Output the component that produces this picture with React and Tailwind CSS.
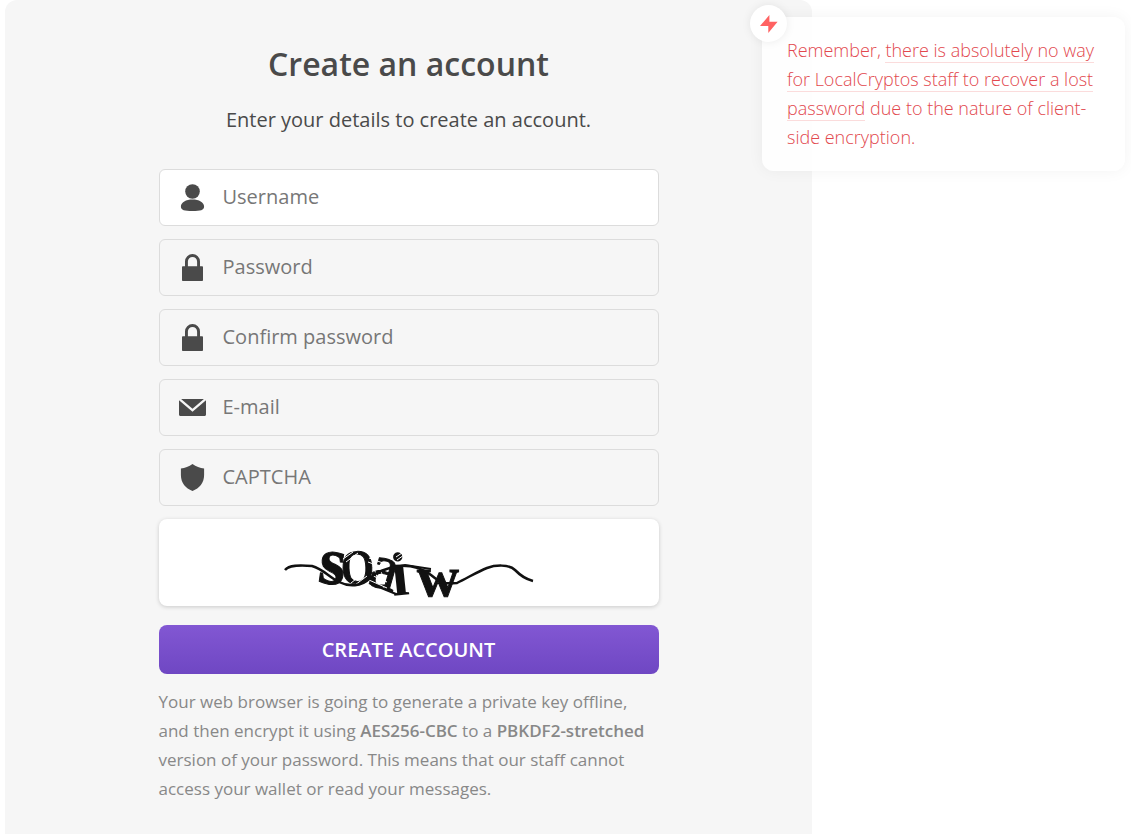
const iconClass = 'h-7 w-7 fill-[#4a4a4a]';

function UserIcon() {
	return (
		<svg viewBox="0 0 28 28" className={iconClass} aria-hidden="true">
			<circle cx="13.500" cy="7.500" r="7.300" />
			<path d="M1.900 22.500c0-4.400 5.200-7.100 11.600-7.100s11.600 2.700 11.600 7.100c0 3.700-3.600 4.500-11.600 4.500s-11.600-.800-11.600-4.500z" />
		</svg>
	);
}

function LockIcon() {
	return (
		<svg viewBox="0 0 28 28" className={iconClass} aria-hidden="true">
			<path d="M6 12.200V7.500a7.500 7.500 0 0 1 15 0v4.700h2.200c.500 0 .800.400.800.800v13.200c0 .500-.400.800-.800.800H3.800c-.500 0-.800-.400-.800-.800V13c0-.500.400-.800.800-.800zm2.900 0h9.200V7.500a4.600 4.600 0 0 0-9.200 0z" />
		</svg>
	);
}

function MailIcon() {
	return (
		<svg viewBox="0 0 28 28" className={iconClass} aria-hidden="true">
			<path d="M2.100 5h22.800L13.500 14.800zM0 6.300l13.500 11.500L27 6.300v14.200c0 .900-.600 1.500-1.500 1.500h-24C.6 22 0 21.400 0 20.500z" />
		</svg>
	);
}

function ShieldIcon() {
	return (
		<svg viewBox="0 0 28 28" className={iconClass} aria-hidden="true">
			<path d="M13.500 0c3.500 2.500 7.500 3.900 11.600 4.500V11c0 8-4.600 13.200-11.600 15.900C6.500 24.200 1.900 19 1.900 11V4.500C6 3.900 10 2.500 13.500 0z" />
		</svg>
	);
}

const fields = [
	{ id: 'username', label: 'Username', type: 'text', Icon: UserIcon },
	{ id: 'password', label: 'Password', type: 'password', Icon: LockIcon },
	{ id: 'confirm', label: 'Confirm password', type: 'password', Icon: LockIcon },
	{ id: 'email', label: 'E-mail', type: 'email', Icon: MailIcon },
	{ id: 'captcha', label: 'CAPTCHA', type: 'text', Icon: ShieldIcon },
];

function Field({ id, label, type, Icon }) {
	return (
		<div className="flex items-center rounded-md border border-[#dcdcdc] pl-[19px] first:bg-white">
			<label htmlFor={id} aria-label={label}>
				<Icon />
			</label>
			<input
				id={id}
				type={type}
				placeholder={label}
				className="h-[55px] min-w-0 flex-1 bg-transparent px-4 pb-0.5 text-xl text-[#4a4a4a] outline-none placeholder:text-[#777]"
			/>
		</div>
	);
}

function Captcha() {
	return (
		<svg
			viewBox="0 0 260 60"
			className="h-[60px] w-[260px] overflow-visible font-['Liberation_Serif',serif]"
			role="img"
			aria-label="Captcha"
		>
			<text fill="#111" stroke="#111">
				<tspan x="38" y="41" rotate="8" fontSize="68" fontWeight="700" strokeWidth="1">s</tspan>
				<tspan x="62" y="43" rotate="-2" fontSize="68" strokeWidth="1">o</tspan>
				<tspan x="87" y="43" rotate="16" fontSize="64" strokeWidth="1">a</tspan>
				<tspan x="114" y="55" rotate="-6" fontSize="62" fontWeight="700" strokeWidth="0">i</tspan>
				<tspan x="138" y="55" rotate="0" fontSize="58" fontWeight="700" strokeWidth="1">w</tspan>
			</text>
			{/* scratches over the middle letters */}
			<path
				d="M64 18l10-7M67 21l12-9M72 42l10-8M76 44l12-9M90 17l14 5M89 21l16 6M92 34l16 7M90 39l18 8M94 25l6 16M100 25l6 16M117 16l6-4M118 19l7-5"
				fill="none"
				stroke="#fff"
				strokeWidth="1"
			/>
			<path
				d="M6 29C10 24 20 24 33 25C44 28 50 36 60 41S82 46 91 37 108 29 116 25C126 24 141 25 152 34S164 43 178 42C190 36 200 30 208 27C216 24 230 23 236 29S246 38 254 40"
				fill="none"
				stroke="#111"
				strokeWidth="2.500"
			/>
			<path d="M90 42L117 53M112 27L126 24L152 28" fill="none" stroke="#111" strokeWidth="2" />
		</svg>
	);
}

function Tip() {
	return (
		<aside className="relative mt-[17px] mr-1.5 -ml-[50px] self-start rounded-xl bg-white/90 py-[19px] pr-6 pl-[25px] shadow-[0_0_16px_rgba(0,0,0,0.05)]">
			<div className="absolute -top-3 -left-3 flex h-[37px] w-[37px] items-center justify-center rounded-full bg-white shadow-[0_0_10px_rgba(0,0,0,0.08)]">
				<svg viewBox="0 0 18 18" className="h-[18px] w-[18px] fill-[#ff6262]" aria-hidden="true">
					<path d="M9.400 0v6.800h8.200L8.300 18v-7H0z" />
				</svg>
			</div>
			<p className="text-lg leading-[29px] font-light text-[#e2484e]">
				Remember,{' '}
				<span className="border-b border-[#fbdcdc]">
					there is absolutely no way for LocalCryptos staff to recover a lost password
				</span>{' '}
				due to the nature of client-side encryption.
			</p>
		</aside>
	);
}

export default function App() {
	return (
		<div className="grid min-h-screen grid-cols-[minmax(0,1fr)_319px] bg-white pl-[5px] font-['Open_Sans',sans-serif]">
			<main className="rounded-t-xl bg-[#f6f6f6] px-6 pt-10 pb-8">
				<form className="mx-auto max-w-[500px]" onSubmit={(e) => e.preventDefault()}>
					<h1 className="text-center text-[32px] leading-[48px] font-semibold text-[#4a4a4a]">Create an account</h1>
					<p className="mt-4 text-center text-xl leading-8 text-[#4a4a4a]">Enter your details to create an account.</p>

					<div className="mt-[33px] flex flex-col gap-[13px]">
						{fields.map((field) => (
							<Field key={field.id} {...field} />
						))}
					</div>

					<div className="mt-[13px] flex h-[87px] items-center justify-center rounded-lg bg-white pt-4 shadow-[0_1px_4px_rgba(0,0,0,0.18)]">
						<Captcha />
					</div>

					<button
						type="submit"
						className="mt-[19px] h-[49px] w-full rounded-lg bg-linear-to-b from-[#8257d3] to-[#6f47c3] text-xl font-semibold text-white"
					>
						CREATE ACCOUNT
					</button>

					<p className="mt-[13px] text-[17px] leading-[29px] text-[#888]">
						Your web browser is going to generate a private key offline, and then encrypt it using{' '}
						<strong className="font-semibold">AES256-CBC</strong> to a{' '}
						<strong className="font-semibold">PBKDF2-stretched</strong> version of your password. This means that our
						staff cannot access your wallet or read your messages.
					</p>
				</form>
			</main>
			<Tip />
		</div>
	);
}
